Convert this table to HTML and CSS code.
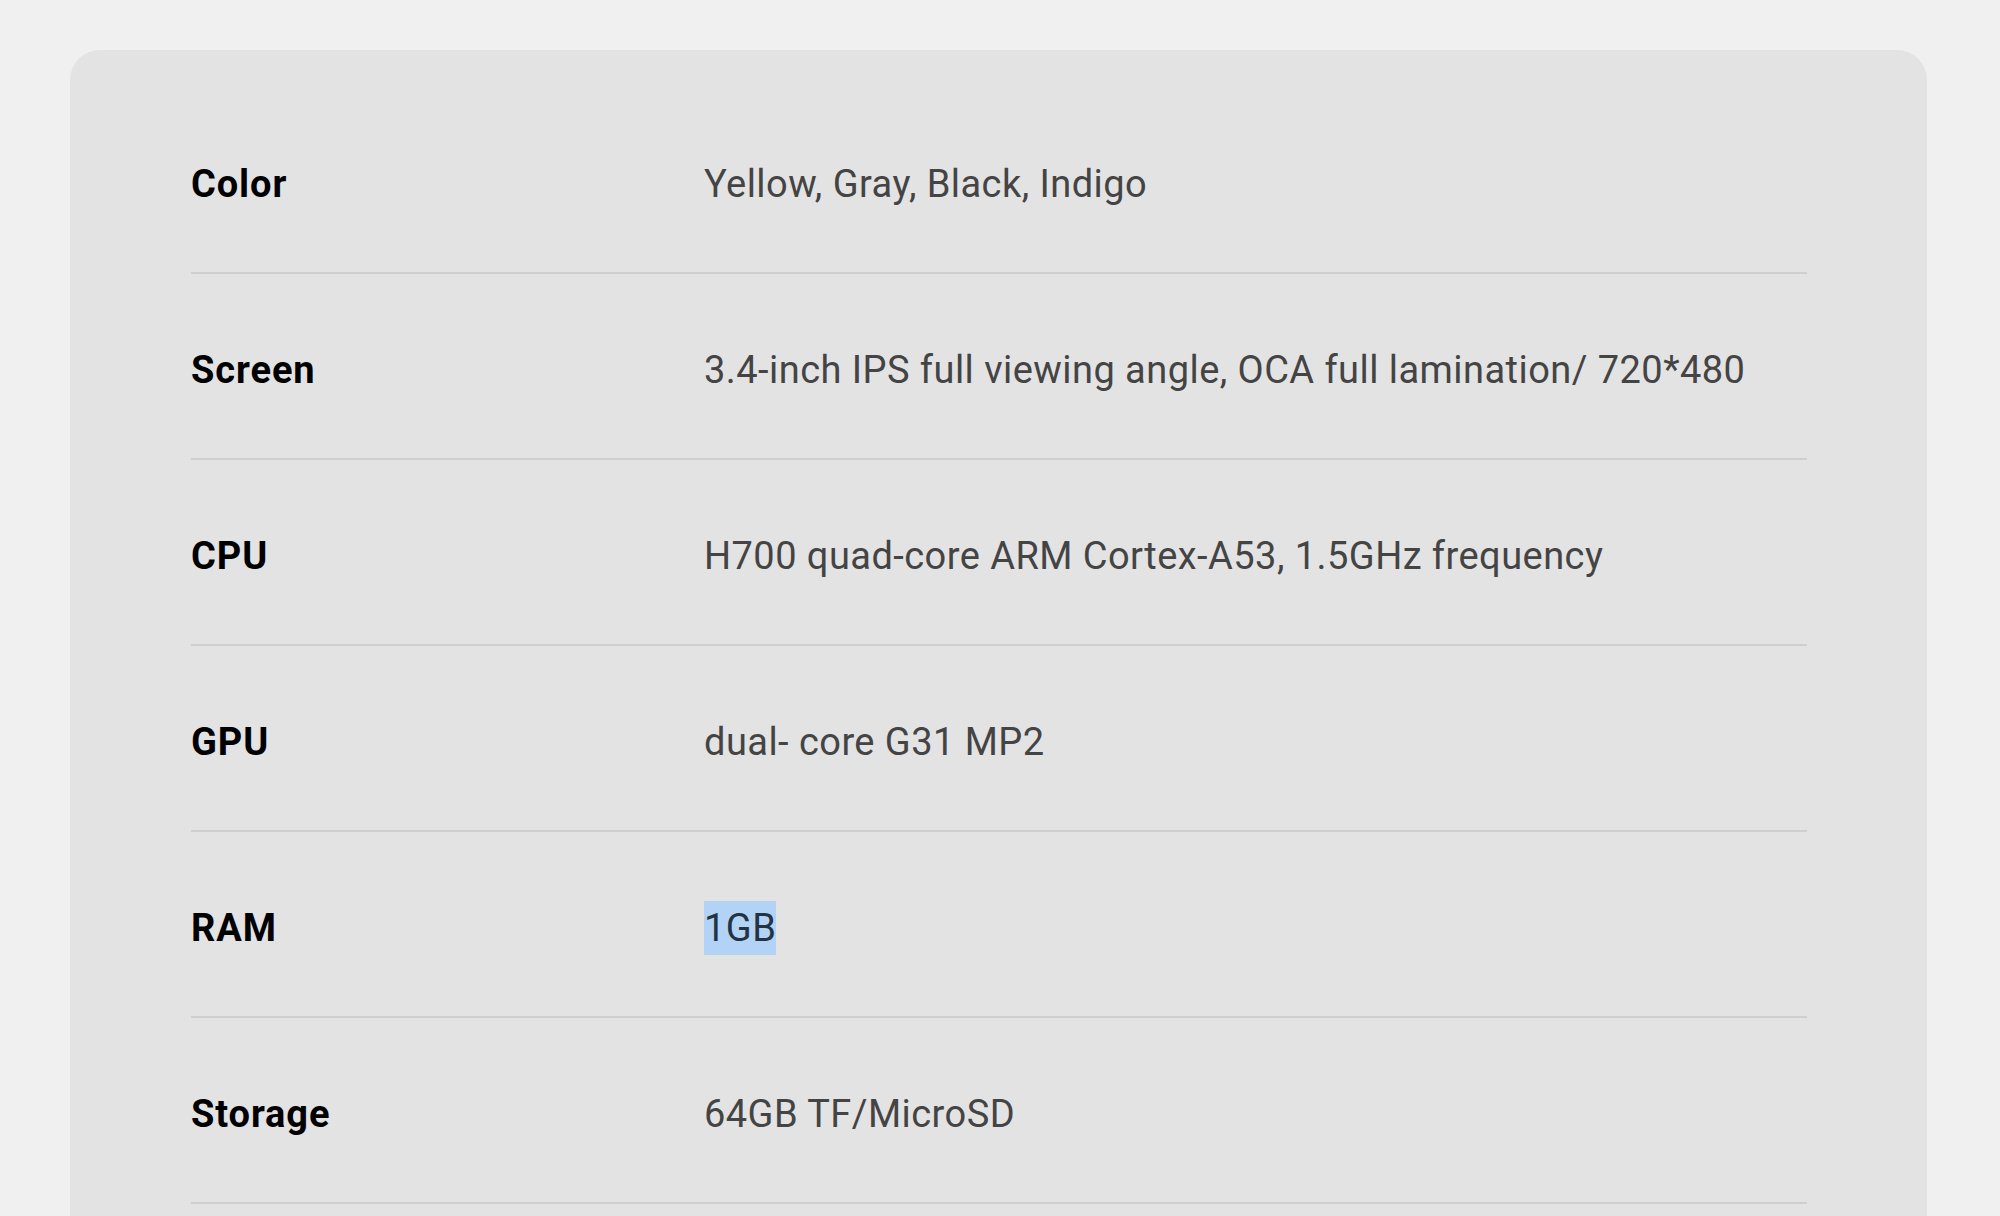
FILE: index.html
```html
<!DOCTYPE html>
<html>
<head>
<meta charset="utf-8">
<link rel="stylesheet" href="styles.css">
</head>
<body>
<div class="card">
  <div class="row"><div class="label">Color</div><div class="value">Yellow, Gray, Black, Indigo</div></div>
  <div class="row"><div class="label">Screen</div><div class="value">3.4-inch IPS full viewing angle, OCA full lamination/ 720*480</div></div>
  <div class="row"><div class="label">CPU</div><div class="value">H700 quad-core ARM Cortex-A53, 1.5GHz frequency</div></div>
  <div class="row"><div class="label">GPU</div><div class="value">dual- core G31 MP2</div></div>
  <div class="row"><div class="label">RAM</div><div class="value"><span class="sel">1GB</span></div></div>
  <div class="row"><div class="label">Storage</div><div class="value">64GB TF/MicroSD</div></div>
</div>
</body>
</html>
```

FILE: styles.css
```css
html, body {
  margin: 0;
  padding: 0;
  background: #f0f0f0;
  height: 1216px;
  overflow: hidden;
}
body {
  padding: 50px 73px 0 70px;
  box-sizing: border-box;
  font-family: Roboto, "Liberation Sans", sans-serif;
}
.card {
  background: #e3e3e3;
  border-radius: 30px;
  padding: 38px 120px 80px 121px;
}
.row {
  display: flex;
  align-items: center;
  box-sizing: border-box;
  height: 186px;
  padding-top: 8px;
  border-bottom: 2px solid #cfcfcf;
}
.label {
  width: 513px;
  flex: none;
  font-weight: 700;
  font-size: 38px;
  color: #000;
  letter-spacing: 0.9px;
}
.value {
  font-size: 38px;
  color: #444;
  letter-spacing: 0.45px;
}
.sel {
  background: #b3d3f6;
  color: #223344;
  padding: 5px 0;
}
```
